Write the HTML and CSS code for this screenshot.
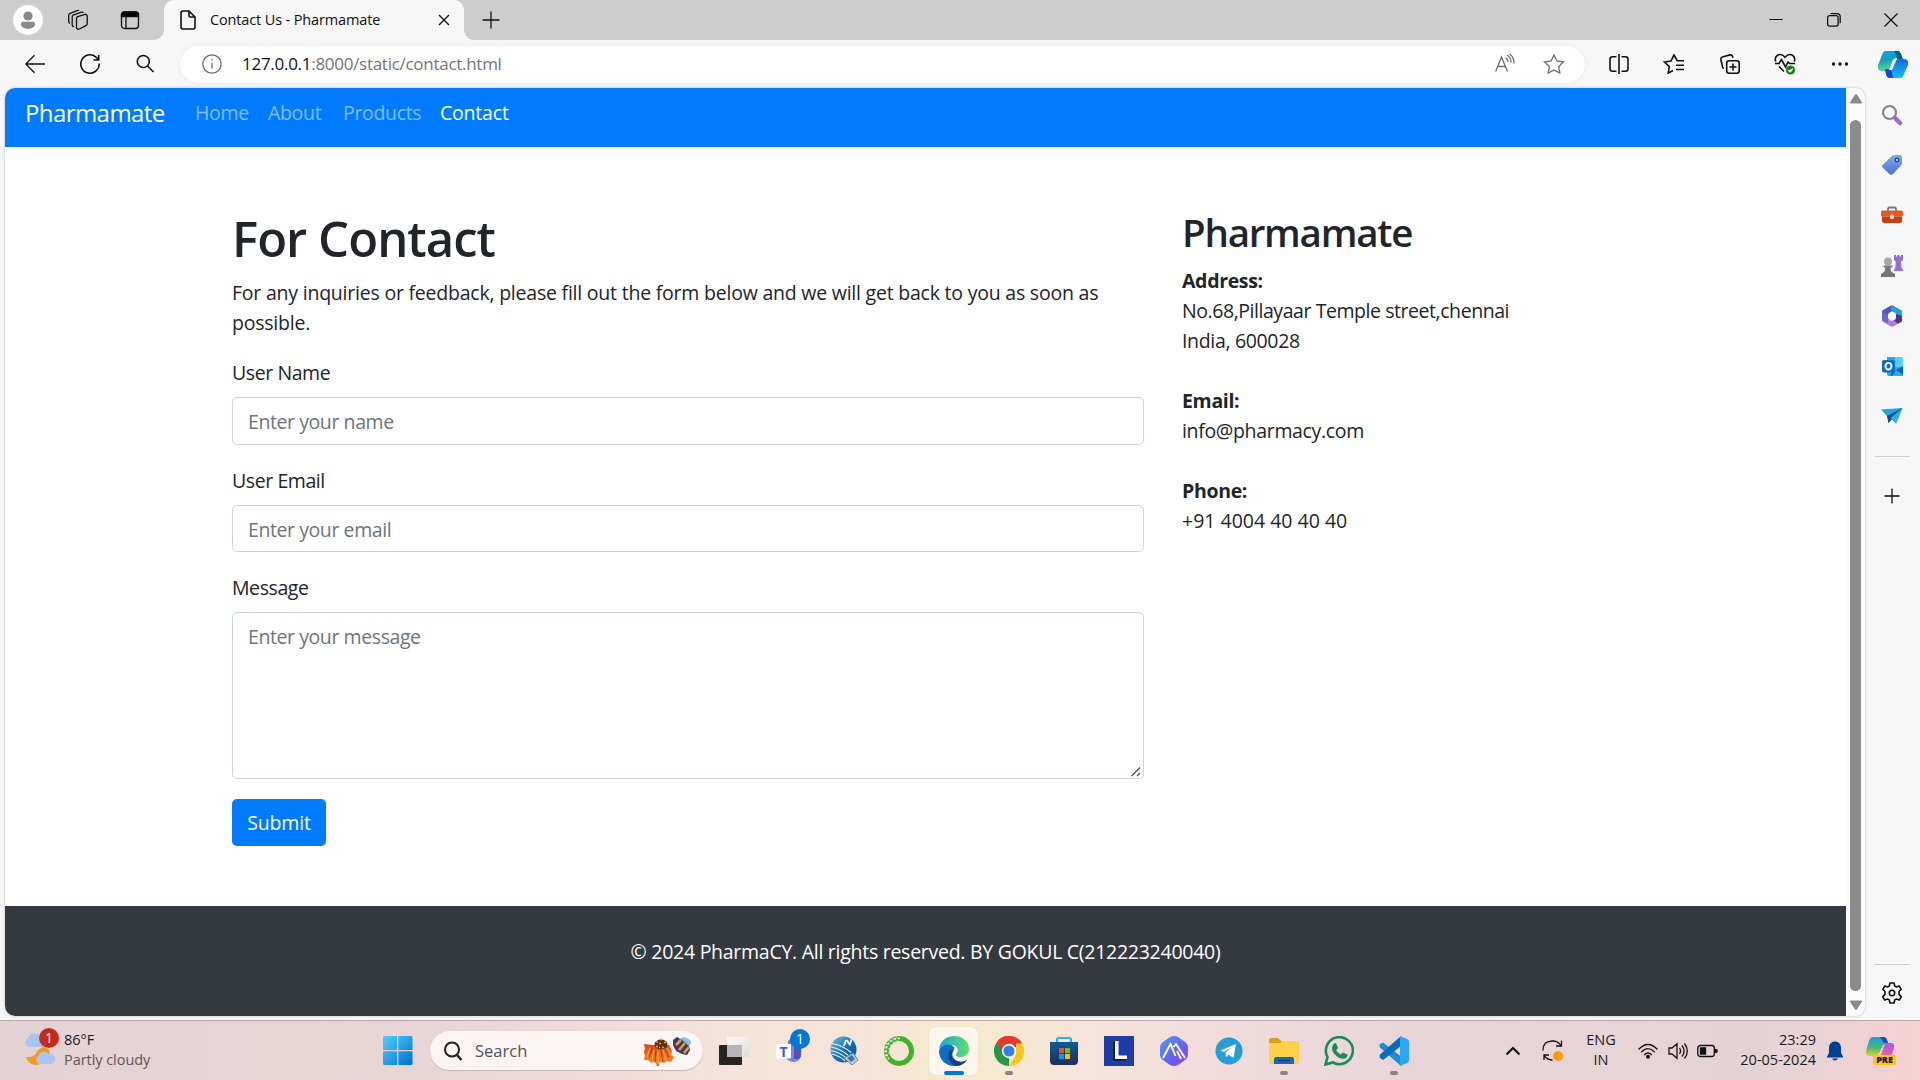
FILE: index.html
```html
<!DOCTYPE html>
<html lang="en">
<head>
<meta charset="utf-8">
<title>Contact Us - Pharmamate</title>
<link rel="stylesheet" href="styles.css">
</head>
<body>
<div class="desktop">
  <header class="tabbar">
    <div class="tab-tools">
      <svg width="30" height="30" viewBox="0 0 30 30"><circle cx="15" cy="15" r="15" fill="#fff"/><circle cx="15" cy="11" r="4.600" fill="#8a8a8a"/><path d="M8 18.800a2 2 0 0 1 2-2h10a2 2 0 0 1 2 2c0 3.500-3 5-7 5s-7-1.500-7-5z" fill="#8a8a8a"/></svg>
      <svg class="ic" width="22" height="22" viewBox="0 0 22 22"><path d="M9.500 9.200q.1-1.200 1.300-1.600l7.200-2.100q1.900-.3 2.200 1.400V14.500q0 1.600-1.300 2.200l-6.500 3.300q-2.300.9-2.900-1.200zM7 17.500l-1-.2q-.8-.4-.8-1.500V8q0-1.600 1.500-2.200L14.500 3.200q1.400-.3 2 .5M3 14.300q-1.300-.5-1.300-2V6.500q0-1.600 1.500-2.200L10 1.700q1.500-.5 2 0"/></svg>
      <svg class="ic" width="20" height="20" viewBox="0 0 20 20"><rect x="1.500" y="2" width="17" height="16.500" rx="3"/><path d="M6 7v11.500" /><path d="M1.500 6.500V5q0-3 3-3h11q3 0 3 3v1.500z" fill="#000"/></svg>
    </div>
    <div class="tab">
      <svg class="ic b" width="16" height="20" viewBox="0 0 16 20"><path d="M1 3q0-2 2-2h6l6 6v10q0 2-2 2H3q-2 0-2-2zM9 1v4.500q0 1.500 1.500 1.500H15"/></svg>
      <span class="tab-title">Contact Us - Pharmamate</span>
      <svg class="ic" width="12" height="12" viewBox="0 0 12 12"><path d="M1 1l10 10M11 1L1 11"/></svg>
    </div>
    <svg class="ic newtab" width="18" height="18" viewBox="0 0 18 18"><path d="M9 .5v17M.5 9h17"/></svg>
    <div class="win-controls">
      <svg class="ic" width="14" height="14" viewBox="0 0 14 14"><path d="M.5 6.500h13" stroke-width="1"/></svg>
      <svg class="ic" width="14" height="14" viewBox="0 0 14 14"><rect x=".6" y="2.600" width="10.500" height="10.500" rx="2"/><path d="M3.500.6H10q3.200 0 3.200 3.200v6.500"/></svg>
      <svg class="ic" width="14" height="14" viewBox="0 0 14 14"><path d="M.5.5l13 13M13.500.5l-13 13"/></svg>
    </div>
  </header>

  <div class="toolbar">
    <div class="nav-tools">
      <svg class="ic" width="20" height="20" viewBox="0 0 20 20"><path d="M20 10H1M9.500 1.200L.8 10l8.700 8.800"/></svg>
      <svg class="ic b" width="20" height="20" viewBox="0 0 20 20"><path d="M19.200 9.500a9.200 9.200 0 1 1-3.500-6.700L18.500 5.500M18.700 1v5H13.500"/></svg>
      <svg class="ic b" width="20" height="20" viewBox="0 0 20 20"><circle cx="8.300" cy="7.500" r="6"/><path d="M12.500 12L18.500 18"/></svg>
    </div>
    <div class="address">
      <svg class="ic gray" width="20" height="20" viewBox="0 0 20 20"><circle cx="10" cy="10" r="9.200"/><path d="M10 8.700v6M10 5v1.500"/></svg>
      <span class="url">127.0.0.1<span class="url-path">:8000/static/contact.html</span></span>
      <svg class="ic gray read" width="20" height="20" viewBox="0 0 20 20"><path d="M.7 17.500L6.500 3l6 14.500M2.700 12.500h8M10.500 3.500q2.200 1.500 2.500 4.500M12 1q4 2.300 4 7.500M14.500 0q4.500 3 4.500 9.500"/></svg>
      <svg class="ic gray" width="22" height="20" viewBox="0 0 22 20"><path d="M11 1l3 6 6.500 1-4.800 4.600 1.100 6.500L11 16l-5.800 3.100 1.100-6.500L1.500 8 8 7z"/></svg>
    </div>
    <div class="actions">
      <svg class="ic b" width="20" height="20" viewBox="0 0 20 20"><path d="M7.500 2.700H3.500Q1 2.700 1 5.200v9.500q0 2.500 2.500 2.500h4M12.500 2.700h4Q19 2.700 19 5.200v9.500q0 2.500-2.500 2.500h-4M10 0v20"/></svg>
      <svg class="ic b" width="22" height="20" viewBox="0 0 22 20"><path d="M21 6.700h-6.800L11 1 8 7 1.500 8l4.800 4.600-1.100 6.500L10 16.500M13 11.300h8M13 15.500h8"/></svg>
      <svg class="ic b" width="20" height="20" viewBox="0 0 20 20"><rect x="6.700" y="6.700" width="12.500" height="12.500" rx="2.500"/><path d="M13 9.500v7M9.500 13h7M3.800 14.500q-1-.3-1.300-1.500L.9 5.500q-.4-2 1.400-2.500L10 .9q2-.4 2.500 1.300l.4 1.500"/></svg>
      <svg class="ic b" width="22" height="22" viewBox="0 0 22 22"><path d="M1.700 8.500C.3 4.500 3 1.500 6 1.500c2.500 0 4 1.500 5 2.700 1-1.200 2.500-2.700 5-2.700 3 0 5.700 3 4.300 7M1 10.500h4l2.500-4 4 7.500 2.500-5 1.500 1.500H21M5 13.500l5 5"/><circle cx="16.500" cy="17" r="4.600" fill="#13801c" stroke="none"/><path d="M14.500 17l1.500 1.500 2.700-2.800" stroke="#fff"/></svg>
      <svg width="20" height="6" viewBox="0 0 20 6" fill="#111"><circle cx="3.500" cy="3" r="1.700"/><circle cx="10" cy="3" r="1.700"/><circle cx="16.500" cy="3" r="1.700"/></svg>
    </div>
    <svg class="copilot" width="30" height="27" viewBox="0 0 30 27">
      <defs><linearGradient id="c1" x2=".2" y2="1"><stop stop-color="#12a3e8"/><stop offset=".5" stop-color="#129fbe"/><stop offset="1" stop-color="#5fdc8c"/></linearGradient><linearGradient id="c2" x2="0" y2="1"><stop stop-color="#1768dc"/><stop offset="1" stop-color="#18bdf7"/></linearGradient></defs>
      <path d="M8 0h12q2 0 3 3l1 5h-5q-3 0-4 4l-2 5q-1 3-4 3H4q-5 0-4-6L4 4q1-4 4-4z" fill="url(#c1)"/><path d="M16 0h4q2 0 3 3l2 5h-6q-2-8-3-8z" fill="#0a5d8d"/><path d="M22 27H12q-3 0-4-4l-1-4h4q3 0 4-4l2-4q1-3 4-3h5q5 0 4 6l-4 9q-1 4-4 4z" fill="url(#c2)"/><path d="M7 18h4q2 0 3 3 0 5 2 6h-4q-3 0-4-4z" fill="#1746ce"/><path d="M14 19h-3l4-10q1-2 4-2l-4 10z" fill="#fff"/>
    </svg>
  </div>

  <main class="viewport">
    <div class="webpage">
      <div class="page">
        <nav class="navbar">
          <a class="brand">Pharmamate</a>
          <a class="nav-link w-home">Home</a><a class="nav-link w-about">About</a><a class="nav-link w-products">Products</a><a class="nav-link w-contact active">Contact</a>
        </nav>
        <div class="container">
          <section class="col-form">
            <h1>For Contact</h1>
            <p class="lead">For any inquiries or feedback, please fill out the form below and we will get back to you as soon as<br>possible.</p>
            <div class="group"><label>User Name</label><div class="field">Enter your name</div></div>
            <div class="group"><label>User Email</label><div class="field">Enter your email</div></div>
            <div class="group"><label>Message</label><div class="field area">Enter your message
              <svg class="grip" width="10" height="10" viewBox="0 0 10 10"><path d="M.5 9L9 .5M6 9l3-3" stroke="#555" stroke-width="1.500" fill="none"/></svg></div></div>
            <button class="submit">Submit</button>
          </section>
          <section class="col-info">
            <h2>Pharmamate</h2>
            <p><b>Address:</b><br><span class="street">No.68,Pillayaar Temple street,chennai</span><br>India, 600028<br><br><b>Email:</b><br>info@pharmacy.com<br><br><b>Phone:</b><br><span class="phone">+91 4004 40 40 40</span></p>
          </section>
        </div>
        <footer class="footer"><span>© 2024 PharmaCY. All rights reserved. BY GOKUL C(212223240040)</span></footer>
      </div>
      <div class="scrollbar">
        <svg width="14" height="10" viewBox="0 0 14 10"><path d="M7 1l5 7.500H2z" fill="#8b8b8b" stroke="#8b8b8b" stroke-width="2" stroke-linejoin="round"/></svg>
        <div class="thumb"></div>
        <svg width="14" height="10" viewBox="0 0 14 10"><path d="M7 9l5-7.500H2z" fill="#8b8b8b" stroke="#8b8b8b" stroke-width="2" stroke-linejoin="round"/></svg>
      </div>
    </div>
    <aside class="sidebar">
      <div class="cell"><svg width="22" height="22" viewBox="0 0 22 22"><circle cx="8.500" cy="8.500" r="6.500" fill="none" stroke="#858585" stroke-width="2.200"/><path d="M14 14l5 5" stroke="#9a6bd0" stroke-width="4.500" stroke-linecap="round"/></svg></div>
      <div class="cell"><svg width="22" height="22" viewBox="0 0 22 22"><defs><linearGradient id="tg" x2="0" y2="1"><stop stop-color="#7fabf0"/><stop offset="1" stop-color="#4a6fd4"/></linearGradient></defs><path d="M11 2q1-1 2.500-1H19q2 0 2 2v6q0 1.500-1 2.500L12 20q-2 1.500-3.500 0L1.500 13.500Q.3 12 1.500 11z" fill="url(#tg)"/><circle cx="16" cy="6" r="1.800" fill="#c8d8f8" stroke="#203f86" stroke-width="1.300"/></svg></div>
      <div class="cell"><svg width="22" height="18" viewBox="0 0 22 18"><path d="M7 5V3q0-1.500 1.500-1.500h5Q15 1.500 15 3v2" fill="none" stroke="#777" stroke-width="1.800"/><rect x="0" y="4.500" width="22" height="6" rx="1.500" fill="#e45a1c"/><path d="M1 10.500h20V15q0 2-2 2H3q-2 0-2-2z" fill="#c63f0c"/><rect x="9" y="8.500" width="4" height="4.500" rx="1.500" fill="#ddd"/></svg></div>
      <div class="cell"><svg width="22" height="22" viewBox="0 0 22 22"><path d="M13 0h2v1.500h1.500V0h2v1.500H20V0h2v5l-2 1.500.5 6L22 15v1h-9v-1l1.300-2.500.4-6L13 5z" fill="#9a6bd2"/><circle cx="7" cy="6.500" r="4" fill="#a8a8a8"/><path d="M2.500 10.500h9V12l-2 .8.5 3.700 4 2.500v3H0v-3l3.500-2.500.8-3.700-1.800-.8z" fill="#777"/></svg></div>
      <div class="cell"><svg width="22" height="22" viewBox="0 0 22 22"><path d="M1 7q0-1.500 1-2l8-4.500 2 5-5 4V14l3 4.500-8-3q-1-.8-1-2z" fill="#5358b8"/><path d="M10 .5q1-.6 2 0l8 4.500q1 .6 1 2v9L15 12V9l-5-3.500z" fill="#25a0df"/><path d="M1 12v3q0 1.500 1 2l8 4.500q1 .5 2 0l6-3.500-5-3-3 1-3-3z" fill="#b07bdc"/><path d="M15 9l6 2v4.500q0 1-1 1.500l-3 1.700-4-3.200q2-1.500 2-3.500z" fill="#4b3592"/><path d="M1 7v8l6 3V9z" fill="#6a62cf"/><circle cx="11" cy="11" r="4" fill="#f7f7f7"/></svg></div>
      <div class="cell"><svg width="21" height="20" viewBox="0 0 21 20"><path d="M5 1h14q1.500 0 1.500 1.500V18q0 2-2 2h-12Q5 20 5 18z" fill="#28a8ea"/><path d="M13 1h6q1.500 0 1.500 1.500V11H13z" fill="#50d0f7"/><path d="M9 17l12-7v8.500q0 1.500-2 1.500H9z" fill="#0c64b8"/><path d="M10 20h9q2 0 2-1.500L14 14z" fill="#2aa8e8"/><rect x="0" y="4" width="13" height="12.500" rx="2" fill="#0b6ccb"/><ellipse cx="6.500" cy="10.200" rx="3" ry="3.300" fill="none" stroke="#fff" stroke-width="1.900"/></svg></div>
      <div class="cell"><svg width="22" height="16" viewBox="0 0 22 16"><path d="M0 1.500L21.500 0 15 15.500 10.500 11 7.500 15 6 8z" fill="#1fa5e5"/><path d="M6 8l15.500-8L7.500 15z" fill="#0d4d8f"/><path d="M9.500 10l12-10L15 15.500z" fill="#2eaee8"/></svg></div>
      <div class="divider"></div>
      <svg class="ic plus" width="16" height="16" viewBox="0 0 16 16"><path d="M8 .5v15M.5 8h15"/></svg>
      <div class="divider low"></div>
      <svg class="ic b gear" width="22" height="22" viewBox="0 0 22 22"><circle cx="11" cy="11" r="2.700"/><path d="M9 1h4l.7 3 1.500.9 3-1 2 3.400L18 9.500v2.900l2.300 2.200-2 3.400-3.100-.9-1.500.9-.7 3H9l-.7-3-1.500-.9-3.100.9-2-3.400L4 12.400V9.500L1.800 7.300l2-3.400 3 1L8.300 4z" stroke-linejoin="round"/></svg>
    </aside>
  </main>

  <div class="taskbar">
    <div class="weather">
      <div class="weather-icon">
        <svg width="34" height="36" viewBox="0 0 34 36"><path d="M5 14a5 5 0 0 1 0-9 7 7 0 0 1 13 0l2 9z" fill="#a8c6f4"/><path d="M3 24q9 1 12-7l5-3q6 0 7 6-4 12-14 12Q6 32 3 24z" fill="#f59a1b"/><path d="M16 31a4.500 4.500 0 0 1-1-8 6.500 6.500 0 0 1 11-2 5 5 0 0 1 2 10z" fill="#a8c6f4"/></svg>
        <span class="badge red">1</span>
      </div>
      <div class="weather-text"><span class="temp">86°F</span><span class="sky">Partly cloudy</span></div>
    </div>
    <svg class="start" width="30" height="30" viewBox="0 0 30 30"><defs><linearGradient id="wn" x2="1" y2="1"><stop stop-color="#4fd0fb"/><stop offset="1" stop-color="#006fd3"/></linearGradient></defs><path d="M1.500 0H14v14H0V1.500Q0 0 1.500 0zM15.300 0H28q1.500 0 1.500 1.500V14H15.300zM0 15.300h14V29H1.500Q0 29 0 27.500zM15.300 15.300h14.200v12.200q0 1.500-1.500 1.500H15.300z" fill="url(#wn)"/></svg>
    <div class="search">
      <svg width="20" height="20" viewBox="0 0 20 20" fill="none" stroke="#222" stroke-width="2"><circle cx="9" cy="8.500" r="7"/><path d="M14 14l4.500 5" stroke-width="2.500"/></svg>
      <span>Search</span>
      <svg width="48" height="30" viewBox="0 0 48 30"><defs><linearGradient id="fl" x2="0" y2="1"><stop stop-color="#d8491a"/><stop offset="1" stop-color="#f98a22"/></linearGradient></defs><path d="M13 24l1 6" stroke="#6a9a34" stroke-width="2.500" fill="none"/><path d="M0 8l9 1 16 0 3 6-1 4 3 2-3 5-4-1-3 2-3-1-3 2-4-2-3 1-3-3-4 0 1-5-2-3 2-3z" fill="url(#fl)"/><path d="M6 12l-3 9M10 14l-2 10M14 15v12M19 14l3 10M23 12l4 7" stroke="#f9b04a" stroke-width="1"/><path d="M8 12l-3 10M12 15l-1 11M17 15l2 11M21 13l4 9" stroke="#c7330f" stroke-width="1"/><ellipse cx="17" cy="8.500" rx="6.500" ry="5" fill="#5e3212"/><path d="M12 6h2m2-2.500h2m2 3h2m-7 1h2m-5 3h2m4 1h2m-5 0h1" stroke="#e8aa33" stroke-width="1.500"/><ellipse cx="41" cy="6" rx="6" ry="4.500" fill="#7cc3f4" transform="rotate(15 41 6)"/><path d="M29 4l4-3 5 3 7 6 1 4-3 5-5-1-6-3-3-6z" fill="#493663"/><path d="M32 9l5-5M35 14l6-7M40 17l5-6" stroke="#dca33b" stroke-width="2.500"/></svg>
    </div>
    <div class="apps">
      <div class="app"><svg width="30" height="30" viewBox="0 0 30 30"><defs><linearGradient id="tv" x2="1" y2="1"><stop stop-color="#fdfdfd"/><stop offset="1" stop-color="#dcdcdc"/></linearGradient></defs><rect x="0" y="9" width="23" height="20" rx="1" fill="#252423"/><rect x="8" y="1" width="22" height="20" rx="1" fill="url(#tv)"/><path d="M8 9h15v12H8z" fill="#b7b5b3"/></svg></div>
      <div class="app"><svg width="30" height="30" viewBox="0 0 30 30"><circle cx="19" cy="7" r="5" fill="#6a74df"/><path d="M11 10h16v8q0 7-7 8-8 0-9-8z" fill="#7b83eb"/><path d="M20 10h7v9q0 4-4 4h-3z" fill="#4b53bc"/><rect x="2" y="8" width="15" height="14.500" rx="1" fill="#fff"/><text x="9.500" y="20.500" class="icon-t">T</text></svg><span class="badge blue">1</span></div>
      <div class="app"><svg width="30" height="30" viewBox="0 0 30 30"><defs><linearGradient id="gl" x2="1" y2="1"><stop stop-color="#73bfe8"/><stop offset=".5" stop-color="#1673b5"/><stop offset="1" stop-color="#075091"/></linearGradient></defs><circle cx="14.500" cy="13.500" r="13" fill="url(#gl)"/><path d="M2 11q10 2 18 9M2 14.500q9 2 16 8M3 18q8 2 13 7M3 7.500q11 2 19 9" stroke="#e5f1f9" stroke-width="1.100" fill="none"/><path d="M17 4l-2 6M22.500 3.500l-2 6M18 4l2 4" stroke="#fff" stroke-width="1.800" fill="none"/><path d="M15 22l9-5 5 7-6 5z" fill="#c3cdd6" stroke="#6f8493"/><path d="M18 22l5-3 3 4-4 3z" fill="#2a78b4"/></svg></div>
      <div class="app"><svg width="30" height="30" viewBox="0 0 30 30"><circle cx="15" cy="15" r="12.500" fill="none" stroke="#43b02a" stroke-width="5"/><path d="M16 2.500A12.500 12.500 0 0 0 5 23" fill="none" stroke="#eff3e0" stroke-width="1.600" stroke-dasharray="2.500 1.500"/><path d="M14 4.700A10.500 10.500 0 0 0 6 20M13 .9A14 14 0 0 0 3 22.500" fill="none" stroke="#eff3e0" stroke-width="1" stroke-dasharray="1.500 2.500"/></svg></div>
      <div class="app active-app"><svg width="30" height="30" viewBox="0 0 30 30"><defs><linearGradient id="e1" x2="1"><stop stop-color="#1ba4e0"/><stop offset="1" stop-color="#5fdf69"/></linearGradient></defs><path d="M0 14C1 5 7 0 15 0c9 0 15 6 15 13 0 5-4 8-8 8-5 0-6-2-5-3 4-5 0-9-4-9C8 9 3 10 0 14z" fill="url(#e1)"/><path d="M0 15C2 9 8 8 12 9c3 1 4 3 3 5-4 5 0 12 7 12 2 0 4-1 6-2-3 4-8 6-13 6C6 30 0 23 0 15z" fill="#0e6dc3"/><path d="M10 16c-2 6 1 12 7 14 5 0 9-3 11-6-4 3-10 2-13-1-3-2-3-6-1-9-2 0-3 1-4 2z" fill="#133f87"/></svg></div>
      <div class="app dot"><svg width="30" height="30" viewBox="0 0 30 30"><path d="M15 15L2 7.500A15 15 0 0 1 28 7.500z" fill="#e23c30"/><path d="M15 15v15A15 15 0 0 1 2 7.500z" fill="#249847"/><path d="M2 7.500A15 15 0 0 1 28 7.500H15l-4 9z" fill="#e23c30"/><path d="M15 30l7-11V7.500h6A15 15 0 0 1 15 30z" fill="#fcc51c"/><circle cx="15" cy="15" r="7.200" fill="#fff"/><circle cx="15" cy="15" r="5.600" fill="#347fe8"/></svg></div>
      <div class="app"><svg width="30" height="30" viewBox="0 0 30 30"><defs><linearGradient id="st" x2="0" y2="1"><stop stop-color="#0b5c9b"/><stop offset="1" stop-color="#1f2f57"/></linearGradient></defs><path d="M8 7V3.500Q8 2 9.500 2h11Q22 2 22 3.500V7" fill="none" stroke="#2aaee8" stroke-width="2"/><path d="M1 6h28v19q0 4-4 4H5q-4 0-4-4z" fill="url(#st)"/><path d="M10 12h5v5h-5z" fill="#f25022"/><path d="M16 12h5v5h-5z" fill="#7fba00"/><path d="M10 18h5v5h-5z" fill="#00a4ef"/><path d="M16 18h5v5h-5z" fill="#ffb900"/></svg></div>
      <div class="app"><svg width="30" height="30" viewBox="0 0 30 30"><path d="M0 0h30v30H0z" fill="#1f3da8"/><path d="M9 6l2-1v18H23l-2 2H9z" fill="#0f2038"/><path d="M11 5h3.500v14.500H23V23H11z" fill="#fff"/></svg></div>
      <div class="app"><svg width="30" height="30" viewBox="0 0 30 30"><defs><linearGradient id="al" x2="1" y2="1"><stop stop-color="#4aa0f5"/><stop offset=".6" stop-color="#6b5cf0"/><stop offset="1" stop-color="#9543f2"/></linearGradient></defs><path d="M15 0q2 0 4 1l7 5q3 2 3 6v6q0 4-3 6l-7 5q-4 2-8 0l-7-5q-3-2-3-6v-6q0-4 3-6l7-5q2-1 4-1z" fill="url(#al)"/><path d="M4 22L11.500 8l5 12M14.500 11L17 8l9 14M18 15l4 8" fill="none" stroke="#fff" stroke-width="1.900"/></svg></div>
      <div class="app"><svg width="28" height="28" viewBox="0 0 28 28"><circle cx="14" cy="14" r="13.500" fill="#259dd8"/><path d="M5.500 13.500L21 7l-2.500 14-5-3.500-2.500 2.500-.5-4.500L17 10l-8 5z" fill="#fff"/></svg></div>
      <div class="app dot"><svg width="30" height="30" viewBox="0 0 30 30"><path d="M0 4q0-2 2-2h7l4 4h14v6H0z" fill="#dca013"/><path d="M0 7h11l3-2h14q2 0 2 2v19q0 2-2 2H2q-2 0-2-2z" fill="#ffd04a"/><path d="M5 28v-5q0-2 2-2h16q2 0 2 2v5z" fill="#0d6cbe"/><path d="M9 24.500h12" stroke="#093c73" stroke-width="1.500"/></svg></div>
      <div class="app"><svg width="30" height="30" viewBox="0 0 30 30"><path d="M1.500 28.500l2-7.500A13.500 13.500 0 1 1 9 26.500z" fill="none" stroke="#1c8a57" stroke-width="2.600"/><path d="M10 7.500l2-.5 2 5-1.800 2.200q1.500 3 4.800 4.300L19 16.500l4.500 2q0 4-4 4.300-5 0-9.500-5.300-4-5.500 0-10z" fill="#1c8a57"/></svg></div>
      <div class="app dot"><svg width="30" height="30" viewBox="0 0 30 30"><path d="M1 8l3-1.500 18 14V30L1 11.500q-1-2 0-3.500z" fill="#1b8bd6"/><path d="M1 22l3 2L22 10V0L1 18.500q-1 2 0 3.500z" fill="#0b6cb8"/><path d="M21 0l7 3q2 1 2 2.500v19q0 1.500-2 2.500l-7 3z" fill="#2aa7f3"/></svg></div>
    </div>
    <div class="tray">
      <svg class="ic chev" width="16" height="10" viewBox="0 0 16 10"><path d="M1.500 8.500L8 2l6.500 6.500" stroke-width="2"/></svg>
      <svg class="ic sync" width="22" height="22" viewBox="0 0 22 22"><path d="M1 10.500Q1 1 10.500 1 16 1 19 5.500M19.500.5V6H14M2 20v-5h5M2.500 16q3 4 8 4"/><circle cx="16" cy="16" r="5" fill="#ff9a0c" stroke="none"/></svg>
      <div class="lang"><span>ENG</span><span>IN</span></div>
      <svg class="ic wifi" width="20" height="16" viewBox="0 0 20 16"><path d="M.5 6.500q9.500-10 19 0M3.300 9.200q6.700-7 13.400 0M6.200 12q3.800-4 7.600 0"/><circle cx="10" cy="13.800" r="1.300" fill="#111"/></svg>
      <svg class="ic vol" width="20" height="18" viewBox="0 0 20 18"><path d="M1 6h3l5-4.300v14.600L4 12H1zM11.500 6q2 3 0 6M14 3.500q4 5.500 0 11M16.500 1.500q5.500 7.500 0 15"/></svg>
      <svg class="ic" width="21" height="14" viewBox="0 0 21 14"><rect x=".8" y="1.500" width="16.500" height="11" rx="2.500"/><path d="M3.500 4h5v6h-5z" fill="#111"/><path d="M18 5.500l2 .5v2l-2 .5z" fill="#111"/></svg>
      <div class="clock"><span>23:29</span><span>20-05-2024</span></div>
      <svg class="bell" width="16" height="20" viewBox="0 0 16 20"><path d="M8 .5c4 0 6 3 6 6.500V12l2 3.500v1H0v-1L2 12V7C2 3.500 4 .5 8 .5zM5 17.500h6q-.8 2-3 2t-3-2z" fill="#003e92"/></svg>
      <svg class="pre" width="30" height="29" viewBox="0 0 30 29"><defs><linearGradient id="p1" x2="0" y2="1"><stop stop-color="#139ee8"/><stop offset=".6" stop-color="#55b86a"/><stop offset="1" stop-color="#e7d22e"/></linearGradient><linearGradient id="p2" x2="0" y2="1"><stop stop-color="#a159f5"/><stop offset="1" stop-color="#f65f84"/></linearGradient></defs><path d="M7 1h10q3 0 4 4l1 3-5 1-4 9q-1 2-4 2H4q-5 0-4-5L3 5q1-4 4-4z" fill="url(#p1)"/><path d="M14 1h4q3 0 4 6h-4z" fill="#1752ca"/><path d="M21 7h4q4 0 3 5l-3 9H12q3-1 4-5l2-6q1-3 3-3z" fill="url(#p2)"/><rect x="7" y="19" width="23" height="10" rx="2" fill="#ffc414"/><text x="18.500" y="27.200" class="pre-t">PRE</text></svg>
    </div>
  </div>
</div>
</body>
</html>
```

FILE: styles.css
```css
* { box-sizing: border-box; }
body { margin: 0; font-family: "Open Sans", "Noto Sans", sans-serif; color: #212529; }
svg { flex: none; display: block; }
.desktop { width: 1920px; height: 1080px; display: flex; flex-direction: column; background: #f7f7f7; overflow: hidden; }
.ic { fill: none; stroke: #111; stroke-width: 1.3; }
.ic.gray { stroke: #6d6d6d; }
.ic.b { stroke-width: 1.6; }

.tabbar { height: 40px; flex: none; background: #cdcdcd; display: flex; align-items: center; }
.tab-tools { width: 164px; padding-left: 13px; display: flex; align-items: center; gap: 24px; }
.tab-tools svg:nth-child(3) { margin-left: 7px; }
.tab { position: relative; width: 300px; height: 40px; background: #f7f7f7; border-radius: 10px 10px 0 0; display: flex; align-items: center; padding: 0 14px 0 16px; }
.tab::before, .tab::after { content: ""; position: absolute; bottom: 0; width: 10px; height: 10px; }
.tab::before { left: -10px; background: radial-gradient(circle at 0 0, #cdcdcd 9.5px, #f7f7f7 10px); }
.tab::after { right: -10px; background: radial-gradient(circle at 100% 0, #cdcdcd 9.5px, #f7f7f7 10px); }
.tab-title { margin-left: 14px; padding-bottom: 1px; flex: 1; font-size: 14.5px; letter-spacing: -.14px; color: #111; white-space: nowrap; }
.newtab { margin-left: 18px; }
.win-controls { margin-left: auto; margin-right: 22px; display: flex; gap: 43.5px; }

.toolbar { height: 48px; flex: none; display: flex; align-items: center; }
.nav-tools { width: 180px; padding-left: 25px; display: flex; gap: 35px; }
.address { width: 1405px; height: 37px; border-radius: 19px; background: #fff; box-shadow: 0 0 4px #e6e6e6; display: flex; align-items: center; padding: 0 20px 0 22px; }
.url { margin-left: 20px; padding-bottom: 2px; flex: 1; font-size: 17px; letter-spacing: -.28px; color: #111; white-space: nowrap; }
.url-path { color: #757575; }
.read { margin-right: 28px; }
.actions { margin-left: 24px; width: 241px; display: flex; align-items: center; justify-content: space-between; }
.copilot { margin-left: 28px; }

.viewport { height: 932px; flex: none; display: flex; padding-left: 5px; }
.webpage { width: 1860px; height: 928px; display: flex; border-radius: 10px; overflow: hidden; background: #fcfcfc; box-shadow: 0 0 3px #bbb; }
.page { width: 1841px; background: #fff; font-size: 19.5px; letter-spacing: -.33px; line-height: 30px; display: flex; flex-direction: column; }
.navbar { height: 59px; background: #007bff; display: flex; padding: 10px 20px 0; }
.brand { width: 160px; font-size: 24px; line-height: 29px; letter-spacing: -.58px; color: #fff; }
.nav-link { padding: 0 10px; color: rgba(255,255,255,.5); white-space: nowrap; }
.nav-link.active { color: #fff; letter-spacing: -.2px; }
.w-home { width: 73px; } .w-about { width: 75px; } .w-products { width: 97px; }
.container { flex: 1; display: flex; padding: 61px 0 0 227px; }
.col-form { width: 912px; }
.col-info { margin-left: 38px; }
h1, h2, p { margin: 0; font-weight: 400; }
h1 { font-size: 49px; line-height: 60px; letter-spacing: -.95px; margin-bottom: 10px; font-weight: 600; }
h2 { font-size: 38.5px; line-height: 48px; letter-spacing: -1.25px; margin-bottom: 10px; font-weight: 600; }
p { white-space: nowrap; }
.lead { margin-bottom: 20px; letter-spacing: -.22px; }
.street { letter-spacing: -.44px; }
.phone { letter-spacing: 0; }
.group { margin-bottom: 21px; }
label { display: block; margin-bottom: 9px; letter-spacing: -.42px; }
.field { position: relative; height: 47.5px; border: 1px solid #ced4da; border-radius: 5px; padding: 9px 15px 0; letter-spacing: -.42px; color: #6c757d; background: #fff; }
.area { height: 166.5px; margin-bottom: -1px; }
.grip { position: absolute; right: 2px; bottom: 1px; }
.submit { display: block; width: 94px; height: 47px; padding: 1px 0 0; border: 0; border-radius: 5px; background: #007bff; color: #fff; font: inherit; letter-spacing: -.2px; }
.footer { height: 110px; background: #343a40; color: #fff; text-align: center; padding-top: 31px; letter-spacing: -.27px; }
.scrollbar { width: 19px; display: flex; flex-direction: column; align-items: center; padding: 6px 0; }
.thumb { width: 11px; flex: 1; margin: 16px 0 9px; border-radius: 6px; background: #8b8b8b; }

.sidebar { width: 54px; display: flex; flex-direction: column; align-items: center; padding-top: 2px; }
.cell { height: 50.2px; display: flex; align-items: center; justify-content: center; }
.divider { width: 35px; height: 1px; background: #cfcfcf; margin-top: 15px; }
.plus { margin-top: 31px; }
.low { margin-top: auto; }
.gear { margin: 17px 0 16px; }

.taskbar { height: 60px; flex: none; border-top: 1px solid #b9a9aa; display: flex; align-items: center; background: linear-gradient(90deg, #e3d3d5 0, #e8d5d6 22%, #f2dcdb 32%, #f5e3d8 38%, #f6e3d9 45%, #f7ebcd 50%, #f6e4d9 56%, #f1dbdc 64%, #e7d5d8 73%, #e8d4d7 85%, #e2d3d6 91%, #f5d1d2 100%); font-size: 14.5px; line-height: 20px; }
.weather { width: 383px; padding-left: 23px; display: flex; align-items: center; }
.weather-icon { position: relative; width: 41px; }
.weather-text, .lang, .clock { display: flex; flex-direction: column; white-space: nowrap; color: #1b1b1b; padding-bottom: 2px; }
.sky { color: #5c5657; letter-spacing: -.05px; }
.badge { position: absolute; width: 20px; height: 20px; border-radius: 50%; color: #fff; font-size: 14px; line-height: 20px; text-align: center; }
.red { background: #c42b1c; left: 16px; top: -5px; }
.blue { background: #0078d4; left: 29px; top: 2px; }
.search { margin-left: 17px; width: 273px; height: 39px; border-radius: 20px; background: #faf4f3; box-shadow: 0 1px 1px #c9b9b9, 0 0 1px #ccc; display: flex; align-items: center; padding: 0 11px 0 13px; font-size: 16.5px; color: #555; }
.search span { margin-left: 12px; flex: 1; }
.apps { display: flex; margin-left: 3px; }
.app { position: relative; width: 55px; height: 48px; display: flex; align-items: center; justify-content: center; }
.active-app::before { content: ""; position: absolute; z-index: 0; left: 3px; top: 0; width: 49px; height: 48px; border-radius: 6px; background: #fdf6ec; box-shadow: 0 0 1px #c9b9b0; }
.active-app svg { position: relative; }
.active-app::after, .dot::after { content: ""; position: absolute; bottom: 0; width: 20px; height: 4px; border-radius: 2px; background: #0078d4; }
.dot::after { width: 8px; background: #8b8180; }
.icon-t { font: 700 14px "Open Sans", sans-serif; text-anchor: middle; fill: #5059c9; }
.pre-t { font: 800 9px "Open Sans", sans-serif; text-anchor: middle; fill: #111; }
.tray { margin-left: auto; padding-right: 24px; display: flex; align-items: center; }
.chev { margin-right: 21px; } .sync { margin-right: 22px; }
.lang { width: 30px; align-items: center; margin-right: 22px; }
.wifi { margin-right: 10px; } .vol { margin-right: 9px; }
.clock { width: 98px; align-items: flex-end; }
.bell { margin-left: 11px; } .pre { margin-left: 23px; }
```
